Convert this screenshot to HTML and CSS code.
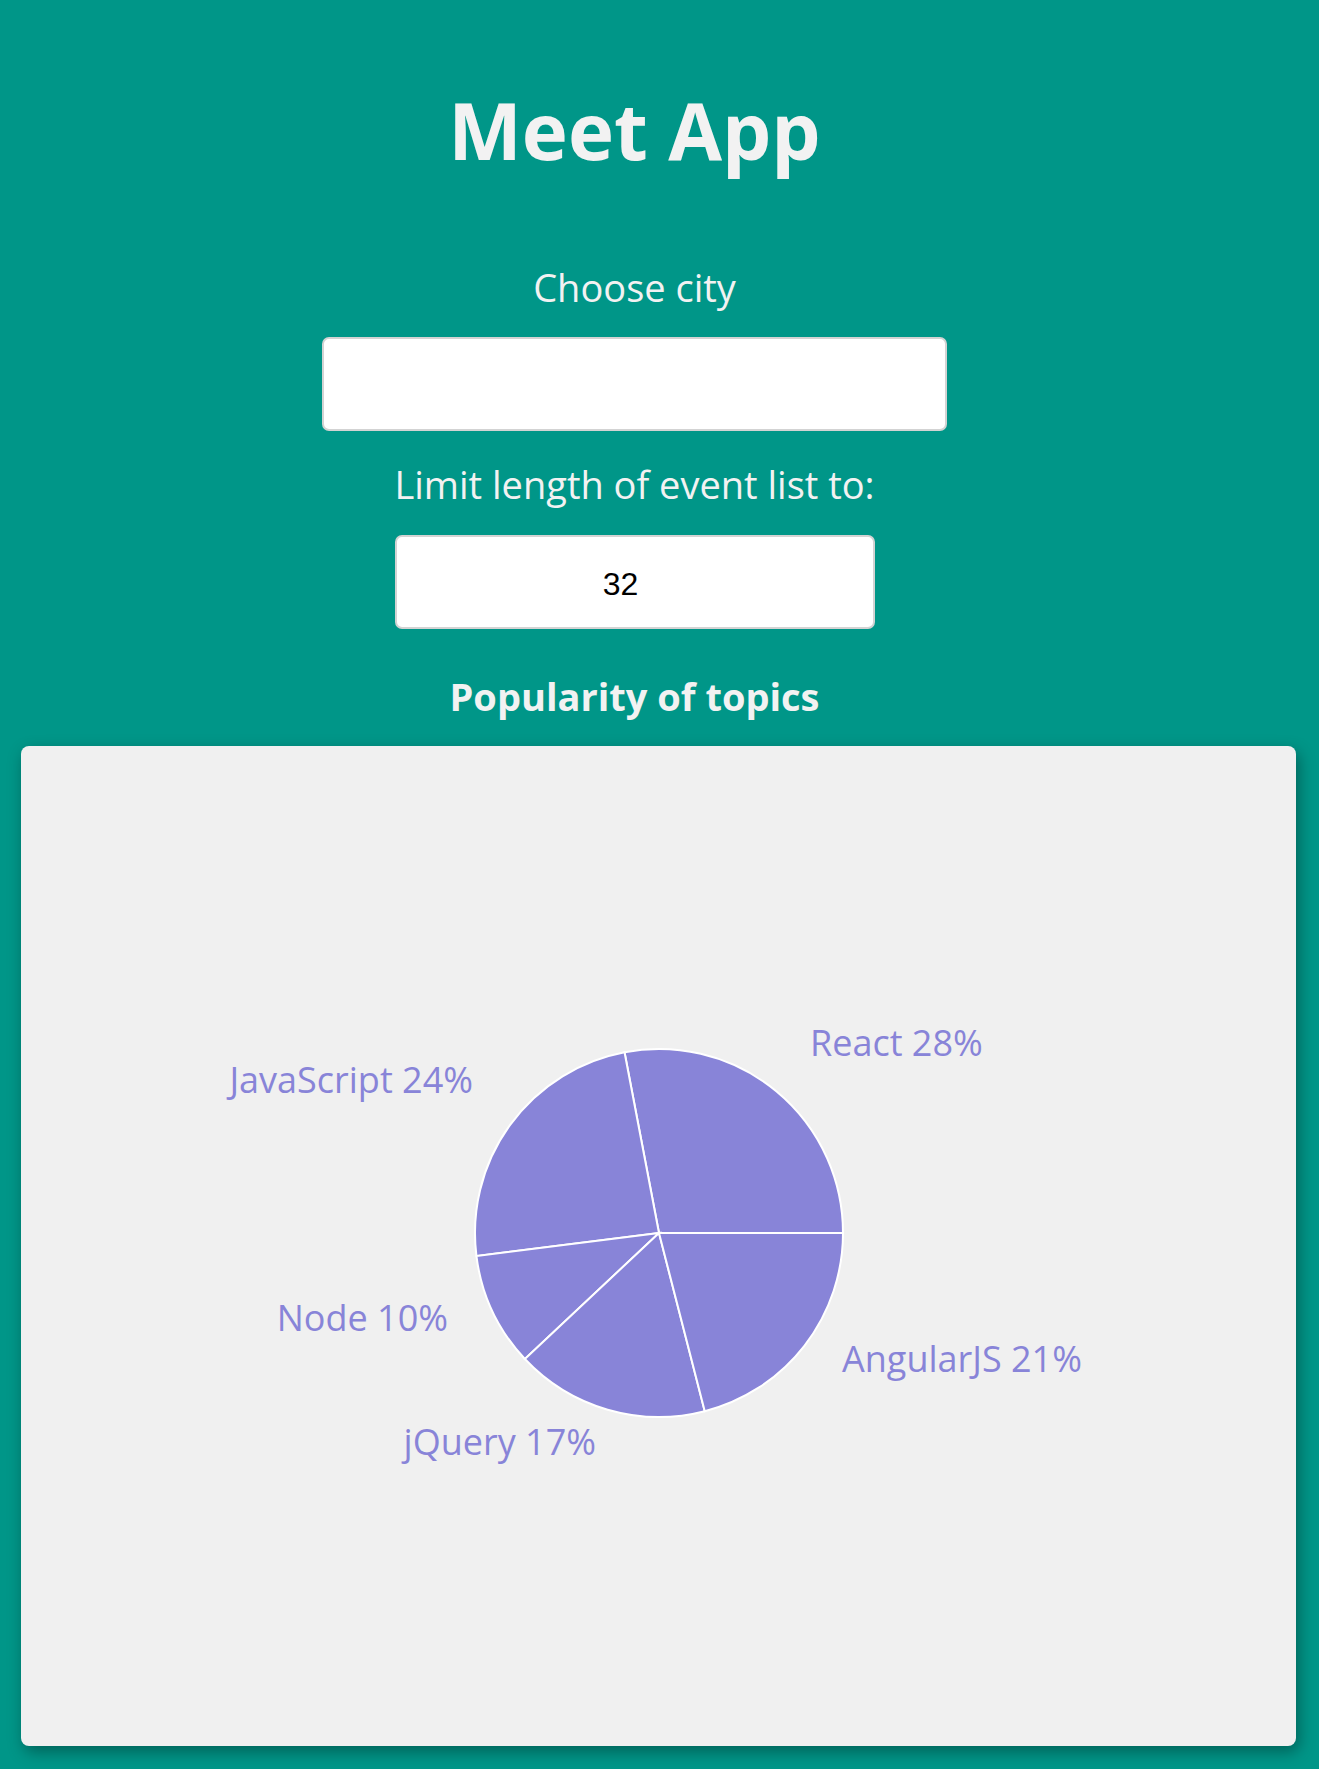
FILE: index.html
```html
<!DOCTYPE html>
<html lang="en">
<head>
<meta charset="utf-8">
<title>Meet App</title>
<link rel="stylesheet" href="styles.css">
</head>
<body>
<div class="app">
  <div class="controls">
    <h1 class="title">Meet App</h1>
    <label class="field-label label-city" for="city">Choose city</label>
    <input id="city" class="city-input" type="text">
    <label class="field-label label-limit" for="limit">Limit length of event list to:</label>
    <input id="limit" class="events-input" type="number" value="32">
    <h2 class="chart-title">Popularity of topics</h2>
  </div>
  <div class="chart-card">
    <svg class="pie" viewBox="21 746 1275 1000" width="1275" height="1000">
      <g class="slices">
        <path d="M659 1233 L843 1233 A184 184 0 0 0 624.52 1052.26 Z"/>
        <path d="M659 1233 L624.52 1052.26 A184 184 0 0 0 476.45 1256.06 Z"/>
        <path d="M659 1233 L476.45 1256.06 A184 184 0 0 0 524.87 1358.96 Z"/>
        <path d="M659 1233 L524.87 1358.96 A184 184 0 0 0 704.76 1411.22 Z"/>
        <path d="M659 1233 L704.76 1411.22 A184 184 0 0 0 843 1233 Z"/>
      </g>
      <g class="labels">
        <text x="810" y="1056" text-anchor="start">React 28%</text>
        <text x="473" y="1093" text-anchor="end">JavaScript 24%</text>
        <text x="448" y="1331" text-anchor="end">Node 10%</text>
        <text x="596" y="1455" text-anchor="end">jQuery 17%</text>
        <text x="842" y="1372" text-anchor="start">AngularJS 21%</text>
      </g>
    </svg>
  </div>
</div>
</body>
</html>
```

FILE: styles.css
```css
html, body {
  margin: 0;
  padding: 0;
}

body {
  background: #009688;
  color: #f2f2f2;
  font-family: "Open Sans", "Noto Sans", sans-serif;
}

.app {
  display: flex;
  flex-direction: column;
  min-height: 1769px;
}

.controls {
  display: flex;
  flex-direction: column;
  align-items: center;
  padding: 84px 50px 0 0;
}

.title {
  margin: 0;
  font-size: 78px;
  font-weight: 700;
  line-height: 1.2;
}

.field-label {
  display: block;
  font-size: 38px;
  font-weight: 400;
  line-height: 1.2;
}

.label-city {
  margin-top: 87px;
}

.label-limit {
  margin-top: 31px;
}

.city-input,
.events-input {
  box-sizing: border-box;
  height: 94px;
  margin-top: 27px;
  background: #ffffff;
  border: 2px solid #d3d3d3;
  border-radius: 7px;
  outline: none;
  font-family: "Liberation Sans", Arial, sans-serif;
  font-size: 32px;
  color: #000000;
}

.city-input {
  width: 625px;
}

.events-input {
  width: 480px;
  text-align: center;
  padding: 5px 28px 0 0;
  -moz-appearance: textfield;
}

.events-input::-webkit-inner-spin-button,
.events-input::-webkit-outer-spin-button {
  -webkit-appearance: none;
  margin: 0;
}

.chart-title {
  margin: 45px 0 0 0;
  font-size: 38px;
  font-weight: 700;
  line-height: 1.17;
}

.chart-card {
  margin: 28px 23px 23px 21px;
  height: 1000px;
  background: #f0f0f0;
  border-radius: 8px;
  box-shadow: 3px 6px 16px rgba(0, 0, 0, 0.35);
  overflow: hidden;
}

.pie {
  display: block;
}

.slices path {
  fill: #8884d8;
  stroke: #ffffff;
  stroke-width: 2;
}

.labels text {
  fill: #8884d8;
  font-family: "Open Sans", "Noto Sans", sans-serif;
  font-size: 36px;
}
```
